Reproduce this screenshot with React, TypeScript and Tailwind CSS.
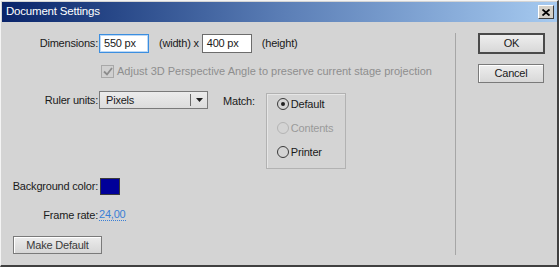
import React from "react";

const font = { fontFamily: '"Liberation Sans", Arial, sans-serif' };

function Radio({ label, checked, disabled }: { label: string; checked?: boolean; disabled?: boolean }) {
  return (
    <div className="flex h-[14px] items-center">
      <div
        className={
          "flex h-[12px] w-[12px] items-center justify-center rounded-full border " +
          (disabled ? "border-[#b4b4b4]" : "border-[#3a3a3a]")
        }
      >
        {checked && <div className="h-[4px] w-[4px] rounded-full bg-[#202020]" />}
      </div>
      <span className={"ml-[2px] " + (disabled ? "text-[#9a9a9a]" : "text-[#1a1a1a]")}>{label}</span>
    </div>
  );
}

export default function App() {
  return (
    <div
      style={font}
      className="flex h-[267px] w-[559px] flex-col border-l border-t border-r-2 border-b-2 border-l-[#f4f4f4] border-t-[#f4f4f4] border-r-[#404040] border-b-[#404040] bg-[#d4d4d4] pl-[1px] pt-[1px] text-[11px] leading-none tracking-[-0.2px] text-[#1a1a1a]"
    >
      {/* Title bar */}
      <div className="flex h-[20px] w-[555px] items-center justify-between bg-gradient-to-r from-[#0a246a] via-[#5a7db5] to-[#a6caf0] pl-[4px] pr-[3px]">
        <span className="text-[11.5px] text-white">Document Settings</span>
        <div className="flex h-[14px] w-[16px] items-center justify-center border border-t-white border-l-white border-r-[#404040] border-b-[#404040] bg-[#d4d0c8]">
          <svg width="8" height="7" viewBox="0 0 8 7">
            <path d="M0.5 0.5 L7.5 6.5 M7.5 0.5 L0.5 6.5" stroke="#000" strokeWidth="1.8" />
          </svg>
        </div>
      </div>

      {/* Body */}
      <div className="flex flex-1">
        {/* Left panel */}
        <div className="flex w-[453px] flex-col">
          {/* Dimensions */}
          <div className="mt-[12px] flex h-[19px] items-center">
            <span className="w-[96px] text-right">Dimensions:</span>
            <div className="ml-[1px] flex h-[19px] w-[50px] items-center border border-[#3b8ee0] bg-white pl-[4px] shadow-[inset_0_0_0_1px_#bcd8f5]">
              550 px
            </div>
            <span className="ml-[10px]">(width) x</span>
            <div className="ml-[3px] flex h-[19px] w-[50px] items-center border border-[#6c6c6c] bg-white pl-[4px]">
              400 px
            </div>
            <span className="ml-[10px]">(height)</span>
          </div>

          {/* Checkbox */}
          <div className="mt-[11px] flex h-[14px] items-center pl-[99px]">
            <div className="flex h-[13px] w-[13px] items-center justify-center border border-[#a8a8a8] bg-[#d0d0d0]">
              <svg width="10" height="9" viewBox="0 0 10 9">
                <path d="M1 4.5 L4 7.5 L9 1" fill="none" stroke="#8c8c8c" strokeWidth="1.8" />
              </svg>
            </div>
            <span className="ml-[3px] tracking-normal text-[#8e8e8e]">Adjust 3D Perspective Angle to preserve current stage projection</span>
          </div>

          {/* Ruler units / Match */}
          <div className="mt-[13px] flex h-[78px] items-start">
            <span className="flex h-[18px] w-[96px] items-center justify-end">Ruler units:</span>
            <div className="ml-[1px] flex h-[18px] w-[109px] items-center border border-[#7a7a7a] bg-gradient-to-b from-[#ececec] to-[#dcdcdc]">
              <span className="flex-1 pl-[6px]">Pixels</span>
              <div className="h-[12px] w-px bg-[#6a6a6a]" />
              <div className="flex w-[16px] justify-center">
                <svg width="7" height="4" viewBox="0 0 7 4">
                  <path d="M0 0 H7 L3.5 4 Z" fill="#202020" />
                </svg>
              </div>
            </div>
            <span className="ml-[15px] flex h-[20px] items-center">Match:</span>
            <div className="ml-[11px] mt-[2px] flex h-[76px] w-[80px] flex-col gap-[10px] border border-[#b2b2b2] pl-[10px] pt-[3px] shadow-[inset_1px_1px_0_#e6e6e6]">
              <Radio label="Default" checked />
              <Radio label="Contents" disabled />
              <Radio label="Printer" />
            </div>
          </div>

          {/* Background color */}
          <div className="mt-[9px] flex h-[17px] items-center">
            <span className="w-[96px] text-right">Background color:</span>
            <div className="ml-[2px] h-[17px] w-[20px] border border-[#3a3a3a] bg-[#000099]" />
          </div>

          {/* Frame rate */}
          <div className="mt-[13px] flex h-[14px] items-center">
            <span className="w-[96px] text-right">Frame rate:</span>
            <span className="ml-[1px] border-b border-dotted border-[#3a7fd5] text-[#3a7fd5]">24,00</span>
          </div>

          {/* Make Default */}
          <div className="mt-[14px] pl-[11px]">
            <div className="flex h-[18px] w-[89px] items-center justify-center border border-[#7a7a7a] bg-gradient-to-b from-[#ececec] to-[#d6d6d6] text-[#3a3a3a] shadow-[inset_1px_1px_0_#ffffff]">
              Make Default
            </div>
          </div>
        </div>

        {/* Separator */}
        <div className="mt-[11px] h-[222px] w-px bg-[#a6a6a6]" />

        {/* Right buttons */}
        <div className="ml-[22px] flex flex-col">
          <div className="mt-[11px] flex h-[21px] w-[67px] items-center justify-center border-2 border-[#4a4a4a] bg-gradient-to-b from-[#eeeeee] to-[#d8d8d8]">
            OK
          </div>
          <div className="mt-[10px] flex h-[19px] w-[66px] items-center justify-center border border-[#7a7a7a] bg-gradient-to-b from-[#eeeeee] to-[#d8d8d8] shadow-[inset_1px_1px_0_#ffffff]">
            Cancel
          </div>
        </div>
      </div>
    </div>
  );
}
